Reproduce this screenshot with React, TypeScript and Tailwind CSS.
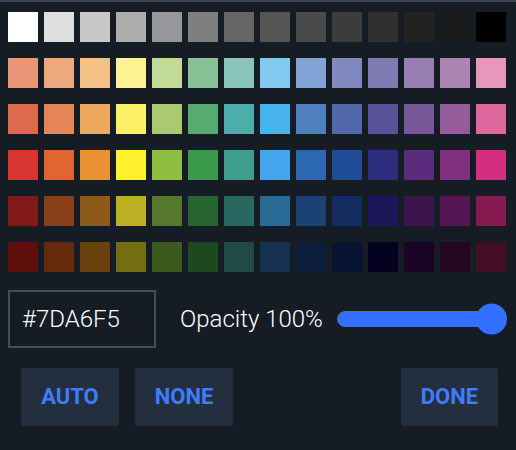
const rows = [
  ["#ffffff", "#dededf", "#c8c8c8", "#adadad", "#97979b", "#7e7e7e", "#656565", "#565656", "#4a4a4a", "#3c3c3c", "#303030", "#222222", "#1a1a1a", "#000000"],
  ["#e89476", "#eda97e", "#f3c186", "#fdf394", "#c2da98", "#89c196", "#88c5bd", "#83caf2", "#82a3d6", "#8288c0", "#807ab3", "#997eb3", "#ae84b4", "#e697ba"],
  ["#de6a4d", "#e58657", "#efa95c", "#fcf067", "#a9ca6f", "#57ab70", "#4dadaa", "#47b3ec", "#4e80c0", "#5368ab", "#5a5299", "#785798", "#945c9a", "#dc689d"],
  ["#d93530", "#e0652f", "#e89233", "#fff12d", "#8fbf42", "#3c9a4c", "#3d9d8f", "#43a5ec", "#2b68b0", "#1f4c97", "#2e2e80", "#5c2b7e", "#7f2f7e", "#d42e82"],
  ["#821a1a", "#8a3f1b", "#8d5a1a", "#bdb024", "#55782c", "#26642f", "#286860", "#2a6a96", "#1b4173", "#122c5f", "#1c1857", "#3c154f", "#541552", "#861b52"],
  ["#5e0f0b", "#652b0c", "#67400e", "#746d12", "#3d5a1e", "#1e481f", "#1f4a45", "#143250", "#0c1e3c", "#081232", "#040020", "#1a0526", "#25061f", "#440f24"],
];

function ActionButton({ label, className = "" }: { label: string; className?: string }) {
  return (
    <button className={`h-[58px] rounded-[2px] bg-[#232f3e] pb-[2px] text-[22px] font-bold text-[#3f7dfb] ${className}`}>
      {label}
    </button>
  );
}

export default function App() {
  return (
    <div className="h-[450px] w-[516px] overflow-hidden border-t-2 border-[#3a4350] bg-[#161c24] font-['Roboto',sans-serif]">
      {/* swatches */}
      <div className="ml-2 mt-2.5 grid grid-cols-[repeat(14,30px)] gap-x-1.5 gap-y-4">
        {rows.flat().map((color, i) => (
          <div key={i} className="h-[30px] w-[30px]" style={{ backgroundColor: color }} />
        ))}
      </div>

      {/* hex + opacity */}
      <div className="mt-[18px] flex items-center pl-2">
        <div className="flex h-[58px] w-[148px] items-center border-2 border-[#434c59] pl-3 text-[24px] font-light text-white">
          #7DA6F5
        </div>
        <span className="ml-6 w-[142px] whitespace-nowrap text-[24px] font-light text-white">Opacity 100%</span>
        <div className="relative ml-[15px] h-4 w-[160px] rounded-full border border-[#4f6cb0] bg-[#3370ff]">
          <div className="absolute -right-[11px] top-1/2 h-[31px] w-[31px] -translate-y-1/2 rounded-full bg-[#3370ff]" />
        </div>
      </div>

      {/* actions */}
      <div className="mt-5 flex pl-[21px] pr-[18px]">
        <ActionButton label="AUTO" className="w-[98px]" />
        <ActionButton label="NONE" className="ml-4 w-[98px]" />
        <ActionButton label="DONE" className="ml-auto w-[97px]" />
      </div>
    </div>
  );
}
